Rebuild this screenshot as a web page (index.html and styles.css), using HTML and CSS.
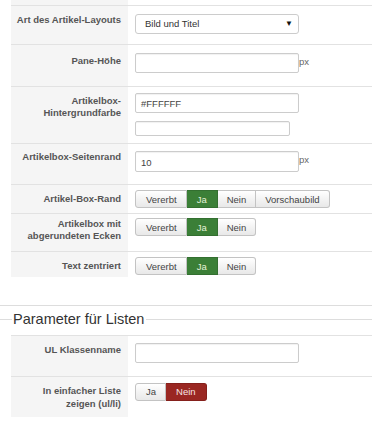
FILE: index.html
```html
<!DOCTYPE html>
<html>
<head>
  <title>Artikel-Layout</title>
  <meta name="viewport" content="width=device-width, initial-scale=1.0">
  <link rel="stylesheet" href="styles.css">
</head>
<body>
  <table class="params">
    <tr class="row-top"><th></th><td></td></tr>
    <tr class="row-1">
      <th>Art des Artikel-Layouts</th>
      <td>
        <div class="select"><span>Bild und Titel</span><span class="caret">&#9660;</span></div>
      </td>
    </tr>
    <tr class="row-2">
      <th>Pane-Höhe</th>
      <td><div class="field"><div class="input"></div><span class="unit">px</span></div></td>
    </tr>
    <tr class="row-3">
      <th>Artikelbox-<br>Hintergrundfarbe</th>
      <td>
        <div class="input">#FFFFFF</div>
        <div class="input input-small"></div>
      </td>
    </tr>
    <tr class="row-4">
      <th>Artikelbox-Seitenrand</th>
      <td><div class="field"><div class="input input-thick">10</div><span class="unit">px</span></div></td>
    </tr>
    <tr class="row-5">
      <th>Artikel-Box-Rand</th>
      <td>
        <div class="btn-group">
          <span class="btn">Vererbt</span><span class="btn btn-yes">Ja</span><span class="btn">Nein</span><span class="btn">Vorschaubild</span>
        </div>
      </td>
    </tr>
    <tr class="row-6">
      <th class="tight">Artikelbox mit<br>abgerundeten Ecken</th>
      <td>
        <div class="btn-group">
          <span class="btn">Vererbt</span><span class="btn btn-yes">Ja</span><span class="btn">Nein</span>
        </div>
      </td>
    </tr>
    <tr class="row-7">
      <th>Text zentriert</th>
      <td>
        <div class="btn-group">
          <span class="btn">Vererbt</span><span class="btn btn-yes">Ja</span><span class="btn">Nein</span>
        </div>
      </td>
    </tr>
  </table>

  <div class="divider"></div>

  <fieldset class="group">
    <legend>Parameter für Listen</legend>
    <table class="params">
      <tr class="row-8">
        <th>UL Klassenname</th>
        <td><div class="input"></div></td>
      </tr>
      <tr class="row-9">
        <th>In einfacher Liste<br>zeigen (ul/li)</th>
        <td>
          <div class="btn-group">
            <span class="btn btn-ja">Ja</span><span class="btn btn-no">Nein</span>
          </div>
        </td>
      </tr>
    </table>
  </fieldset>
</body>
</html>
```

FILE: styles.css
```css
body {
  margin: 0;
  padding: 0;
  background-color: #fff;
  font-family: "Liberation Sans", Arial, sans-serif;
  color: #333;
  overflow: hidden;
}

.params {
  border-collapse: collapse;
  margin-left: 11px;
  width: 361px;
}

.params th,
.params td {
  border-top: 1px solid #e2e2e2;
  vertical-align: top;
  padding: 0;
}

.params th {
  width: 106px;
  background-color: #f5f5f5;
  color: #555;
  font-size: 9.5px;
  font-weight: bold;
  line-height: 12.5px;
  text-align: right;
  padding: 8px 7px 0 4px;
}

.params th.tight {
  padding-top: 4px;
}

.params td {
  padding: 7px 0 0 7px;
}

.row-top { height: 5px; }
.row-top th,
.row-top td {
  border-top: none;
  padding: 0;
}

.row-1 { height: 39px; }
.row-1 td { padding-top: 8px; }
.row-2 { height: 42px; }
.row-2 td { padding-top: 8px; }
.row-2 th { padding-top: 10px; }
.row-3 { height: 57px; }
.row-3 td { padding-top: 6px; }
.row-4 { height: 41px; }
.row-4 th { padding-top: 7px; }
.row-5 { height: 29px; }
.row-5 td { padding-top: 4px; }
.row-6 { height: 38px; }
.row-6 td { padding-top: 3px; }
.row-7 { height: 26px; }
.row-7 td { padding-top: 4px; }
.row-8 { height: 41px; }
.row-9 { height: 40px; }
.row-9 td { padding-top: 4px; }

.select {
  width: 164px;
  height: 20px;
  box-sizing: border-box;
  border: 1px solid #ccc;
  border-radius: 3px;
  background: #fff;
  display: flex;
  align-items: center;
  justify-content: space-between;
  padding: 0 5px 0 9px;
  font-size: 9.5px;
  color: #333;
}

.caret {
  font-size: 8px;
  color: #111;
}

.field {
  display: flex;
  align-items: flex-start;
}

.unit {
  font-size: 9.5px;
  color: #666;
  margin-top: 3px;
}

.input {
  width: 164px;
  height: 20px;
  box-sizing: border-box;
  border: 1px solid #ccc;
  border-radius: 2px;
  background: #fff;
  box-shadow: inset 0 1px 1px rgba(0, 0, 0, 0.06);
  font-size: 9.5px;
  line-height: 18px;
  padding: 1px 5px 0;
  color: #444;
}

.input-thick {
  height: 21px;
  line-height: 19px;
}

.input-small {
  width: 155px;
  height: 15px;
  margin-top: 8px;
}

.btn-group {
  display: inline-flex;
}

.btn {
  height: 18px;
  box-sizing: border-box;
  display: flex;
  align-items: center;
  padding: 0 9px;
  font-size: 9.5px;
  color: #444;
  background: linear-gradient(#ffffff, #e8e8e8);
  border: 1px solid #c3c3c3;
  border-left: none;
}

.btn:first-child {
  border-left: 1px solid #c3c3c3;
  border-radius: 3px 0 0 3px;
}

.btn:last-child {
  border-radius: 0 3px 3px 0;
}

.btn-group .btn:first-child {
  padding-left: 10px;
}

.btn-yes {
  background: #3b7f37;
  border-color: #336f30;
  color: #e4f2d8;
  padding: 0 10px;
}

.btn-ja {
  padding: 0 9px 0 10px;
}

.btn-no {
  background: #9a2722;
  border-color: #85201c;
  color: #f6e4e2;
  padding: 0 10px;
}

.divider {
  margin-top: 28px;
  border-top: 1px solid #ddd;
}

.group {
  margin: 5px 0 0 0;
  padding: 0;
  border: none;
  border-top: 1px solid #ddd;
}

.group legend {
  padding: 0 2px 0 1px;
  margin-left: 12px;
  font-size: 14.5px;
  color: #333;
}

.group .params {
  margin-top: 8px;
}
```
